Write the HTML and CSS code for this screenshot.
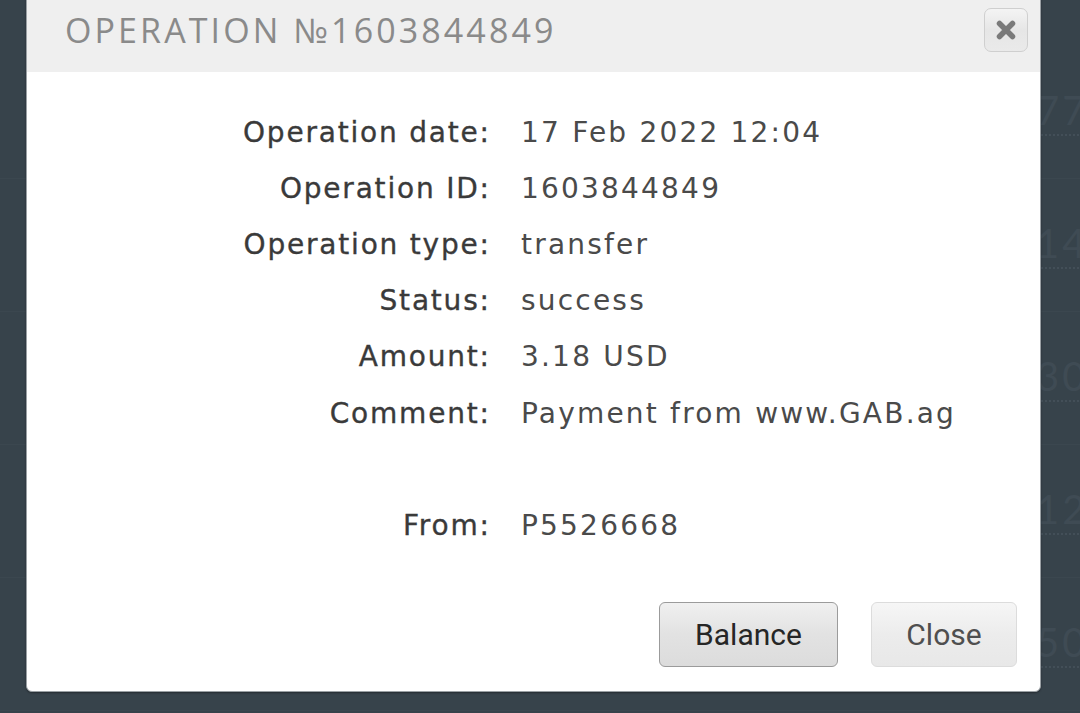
FILE: index.html
```html
<!DOCTYPE html>
<html>
<head>
<meta charset="utf-8">
<link rel="stylesheet" href="styles.css">
</head>
<body>
<div class="bg-table">
  <div class="bg-row"><span class="bg-num">777</span></div>
  <div class="bg-row"><span class="bg-num">147</span></div>
  <div class="bg-row"><span class="bg-num">304</span></div>
  <div class="bg-row"><span class="bg-num">121</span></div>
  <div class="bg-row"><span class="bg-num">506</span></div>
</div>

<div class="dialog">
  <div class="dialog-header">
    <h1 class="dialog-title">OPERATION №1603844849</h1>
    <button class="x-btn" aria-label="close">
      <svg width="22" height="22" viewBox="0 0 22 22"><path d="M4.5 4.5 L17.5 17.5 M17.5 4.5 L4.5 17.5" stroke="#7a7a7a" stroke-width="5.5" stroke-linecap="round"/></svg>
    </button>
  </div>
  <div class="dialog-body">
    <div class="info">
      <div class="label">Operation date:</div><div class="value">17 Feb 2022 12:04</div>
      <div class="label">Operation ID:</div><div class="value">1603844849</div>
      <div class="label">Operation type:</div><div class="value">transfer</div>
      <div class="label">Status:</div><div class="value">success</div>
      <div class="label">Amount:</div><div class="value">3.18 USD</div>
      <div class="label">Comment:</div><div class="value">Payment from www.GAB.ag</div>
      <div class="label"></div><div class="value"></div>
      <div class="label">From:</div><div class="value">P5526668</div>
    </div>
    <div class="actions">
      <button class="btn btn-primary">Balance</button>
      <button class="btn btn-light">Close</button>
    </div>
  </div>
</div>
</body>
</html>
```
FILE: styles.css
```css
html, body {
  margin: 0;
  padding: 0;
  height: 100%;
}
body {
  background: #37434b;
  overflow: hidden;
  font-family: "DejaVu Sans", sans-serif;
}

.bg-table {
  padding-top: 46px;
}
.bg-row {
  height: 133px;
  box-sizing: border-box;
  border-bottom: 1px solid #3b474f;
  padding-left: 1036px;
}
.bg-num {
  display: inline-block;
  font-family: "Lato", sans-serif;
  font-size: 40px;
  letter-spacing: 3px;
  color: #3f4b54;
  line-height: 48px;
  padding-top: 40px;
  border-bottom: 2px dotted #434f58;
}

.dialog {
  position: absolute;
  left: 26px;
  top: -10px;
  width: 1015px;
  height: 702px;
  background: #fff;
  border-radius: 6px;
  border: 1px solid #9aa0a4;
  box-sizing: border-box;
  box-shadow: 0 1px 2px rgba(0,0,0,0.35);
  display: flex;
  flex-direction: column;
  overflow: hidden;
}

.dialog-header {
  height: 81px;
  box-sizing: border-box;
  background: #efefef;
  padding: 16px 12px 0 38px;
  display: flex;
  align-items: flex-start;
  justify-content: space-between;
}
.dialog-title {
  margin: 0;
  font-family: "Open Sans", sans-serif;
  font-weight: 400;
  font-size: 34px;
  line-height: 46px;
  letter-spacing: 3.1px;
  color: #8a8a8a;
}
.x-btn {
  width: 44px;
  height: 44px;
  border: 1px solid #cfcfcf;
  border-radius: 7px;
  background: linear-gradient(#f4f4f4, #e6e6e6 50%, #eaeaea);
  display: flex;
  align-items: center;
  justify-content: center;
  padding: 0;
  margin-top: 1px;
}

.dialog-body {
  flex: 1;
  display: flex;
  flex-direction: column;
  padding: 32px 23px 24px 0;
}
.info {
  display: grid;
  grid-template-columns: 462px 1fr;
  column-gap: 32px;
  grid-auto-rows: 56.2px;
  align-items: center;
  font-size: 28px;
  color: #404040;
}
.label {
  text-align: right;
  font-weight: 400;
  color: #3a3a3a;
  letter-spacing: 1.8px;
  margin-right: -1.8px;
  -webkit-text-stroke: 0.35px #3a3a3a;
}
.value {
  font-weight: 400;
  color: #4a4a4a;
  letter-spacing: 2.2px;
}

.actions {
  margin-top: auto;
  display: flex;
  justify-content: flex-end;
  gap: 33px;
}
.btn {
  height: 65px;
  border-radius: 6px;
  font-family: "Roboto", sans-serif;
  font-size: 30px;
  padding: 0;
}
.btn-primary {
  width: 179px;
  border: 1px solid #9b9b9b;
  background: linear-gradient(#f0f0f0, #e2e2e2 50%, #dcdcdc);
  color: #262626;
}
.btn-light {
  width: 146px;
  border: 1px solid #dcdcdc;
  background: linear-gradient(#f6f6f6, #ececec 50%, #e8e8e8);
  color: #4f4f4f;
}
```
